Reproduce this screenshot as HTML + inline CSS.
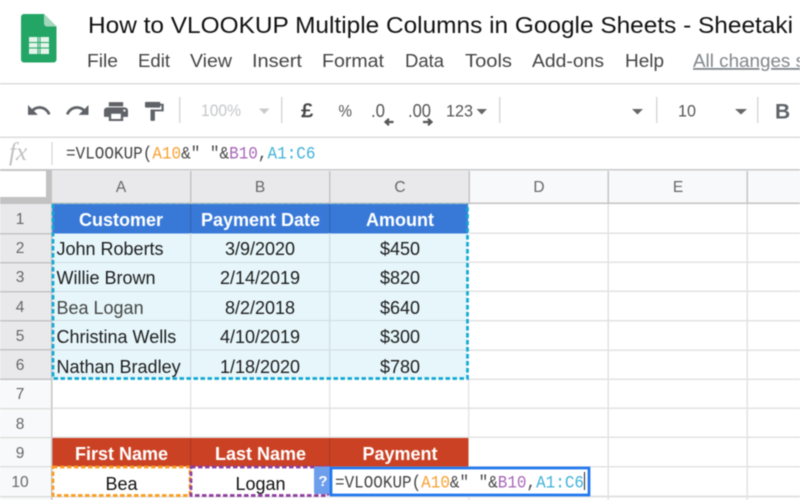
<!DOCTYPE html>
<html><head><meta charset="utf-8"><style>
html,body{margin:0;padding:0;background:#fff;width:800px;height:500px;overflow:hidden}
svg{display:block;filter:blur(.4px)}
text{font-family:"Liberation Sans",Arial,sans-serif}
.m{font-size:18px;fill:#444}
.mono{font-family:"Liberation Mono",monospace;font-size:17.500px;fill:#444}
.h{font-size:15.500px;fill:#666;text-anchor:middle}
.c{font-size:18px;fill:#1c1c1c}
.ctr{text-anchor:middle}
.w{font-size:18px;font-weight:bold;fill:#fff;text-anchor:middle}
.i{fill:#5f6368}
.o{fill:#f7a030}.p{fill:#a866b8}.b{fill:#3fb2d8}
</style></head><body>
<svg width="800" height="500" viewBox="0 0 800 500" xmlns="http://www.w3.org/2000/svg">
<rect width="800" height="500" fill="#fff"/>
<!-- logo -->
<path d="M24 14h20l12.500 12.500v33a3 3 0 0 1-3 3H24a3 3 0 0 1-3-3V17a3 3 0 0 1 3-3z" fill="#23a566"/>
<path d="M44 14l12.500 12.500H47a3 3 0 0 1-3-3z" fill="#a4d6bd"/>
<rect x="29" y="37" width="20" height="17" fill="#e6f4ec"/>
<path d="M29 42.500h20M29 48h20M38 37v17M40 37v17" stroke="#23a566" stroke-width="1" fill="none"/>
<!-- title -->
<text x="88" y="33" font-size="23" fill="#111" textLength="705" lengthAdjust="spacingAndGlyphs">How to VLOOKUP Multiple Columns in Google Sheets - Sheetaki</text>
<text class="m" x="87" y="67" textLength="31" lengthAdjust="spacingAndGlyphs">File</text>
<text class="m" x="138" y="67" textLength="32" lengthAdjust="spacingAndGlyphs">Edit</text>
<text class="m" x="190" y="67" textLength="42" lengthAdjust="spacingAndGlyphs">View</text>
<text class="m" x="252" y="67" textLength="50" lengthAdjust="spacingAndGlyphs">Insert</text>
<text class="m" x="322" y="67" textLength="62" lengthAdjust="spacingAndGlyphs">Format</text>
<text class="m" x="405" y="67" textLength="39" lengthAdjust="spacingAndGlyphs">Data</text>
<text class="m" x="465" y="67" textLength="47" lengthAdjust="spacingAndGlyphs">Tools</text>
<text class="m" x="532" y="67" textLength="72" lengthAdjust="spacingAndGlyphs">Add-ons</text>
<text class="m" x="625" y="67" textLength="39" lengthAdjust="spacingAndGlyphs">Help</text>
<text x="693" y="67" font-size="18" fill="#80868b" text-decoration="underline" textLength="112" lengthAdjust="spacingAndGlyphs">All changes s</text>
<!-- bars -->
<rect y="83" width="800" height="1.500" fill="#dcdcdc"/>
<rect y="136.500" width="800" height="1.500" fill="#dcdcdc"/>
<rect y="169" width="800" height="1.500" fill="#c8c8c8"/>
<g fill="#d8d8d8">
<rect x="179" y="97" width="1.500" height="26"/><rect x="281" y="97" width="1.500" height="26"/>
<rect x="499" y="97" width="1.500" height="26"/><rect x="656" y="97" width="1.500" height="26"/><rect x="757" y="97" width="1.500" height="26"/>
</g>
<!-- toolbar icons -->
<path class="i" transform="translate(25.800 97.300) scale(1.100)" d="M12.500 8c-2.650 0-5.050.99-6.900 2.600L2 7v9h9l-3.620-3.620c1.390-1.160 3.160-1.880 5.120-1.880 3.540 0 6.550 2.310 7.600 5.500l2.370-.78C21.080 11.030 17.150 8 12.500 8z"/>
<path class="i" transform="translate(64.300 97.300) scale(1.100)" d="M18.400 10.600C16.550 8.990 14.150 8 11.500 8c-4.650 0-8.580 3.030-9.960 7.220L3.900 16c1.050-3.190 4.050-5.500 7.600-5.500 1.950 0 3.730.72 5.120 1.880L13 16h9V7l-3.600 3.600z"/>
<path class="i" transform="translate(101.600 99) scale(1.200 1.050)" d="M19 8H5c-1.660 0-3 1.340-3 3v6h4v4h12v-4h4v-6c0-1.660-1.340-3-3-3zm-3 11H8v-5h8v5zm3-7c-.55 0-1-.45-1-1s.45-1 1-1 1 .45 1 1-.45 1-1 1zm-1-9H6v4h12V3z"/>
<path class="i" transform="translate(140.600 100) scale(1.100 .95)" d="M18 4V3c0-.55-.45-1-1-1H5c-.55 0-1 .45-1 1v4c0 .55.45 1 1 1h12c.55 0 1-.45 1-1V6h1v4H9v11c0 .55.45 1 1 1h2c.55 0 1-.45 1-1v-9h8V4h-3z"/>
<text x="201" y="116" font-size="17" fill="#c4c6c8" textLength="40" lengthAdjust="spacingAndGlyphs">100%</text>
<path d="M259 108.500h10.500l-5.250 5.500z" fill="#c8cacc"/>
<text x="301" y="117" font-size="19" fill="#444" stroke="#444" stroke-width=".5" textLength="12" lengthAdjust="spacingAndGlyphs">£</text>
<text x="338.500" y="116.500" font-size="17" fill="#555" textLength="13.500" lengthAdjust="spacingAndGlyphs">%</text>
<text x="371" y="117" font-size="18" fill="#555" textLength="14" lengthAdjust="spacingAndGlyphs">.0</text>
<path d="M393.500 122h-8m3.500-3.200l-3.500 3.200 3.500 3.200" stroke="#555" stroke-width="2.200" fill="none"/>
<text x="408" y="117" font-size="18" fill="#555" textLength="23" lengthAdjust="spacingAndGlyphs">.00</text>
<path d="M423 122h8.500m-3.500-3.200l3.500 3.200-3.500 3.200" stroke="#555" stroke-width="2.200" fill="none"/>
<text x="446" y="116.500" font-size="17" fill="#555" textLength="27" lengthAdjust="spacingAndGlyphs">123</text>
<path d="M476.500 109h10.500l-5.250 5.500z" fill="#666"/>
<path d="M632 109h11l-5.500 5.500z" fill="#666"/>
<text x="678" y="116.500" font-size="17" fill="#555" textLength="18" lengthAdjust="spacingAndGlyphs">10</text>
<path d="M735 109h12l-6 5.500z" fill="#666"/>
<text x="775" y="118.500" font-size="21" font-weight="bold" fill="#5f6368">B</text>
<!-- formula bar -->
<text x="9" y="160" font-style="italic" font-size="25" fill="#bfbfbf" style="font-family:'Liberation Serif',serif">fx</text>
<rect x="51.500" y="142" width="1" height="23" fill="#cfcfcf"/>
<text class="mono" x="66" y="158.500" textLength="249.500" lengthAdjust="spacingAndGlyphs">=VLOOKUP(<tspan class="o">A10</tspan>&amp;" "&amp;<tspan class="p">B10</tspan>,<tspan class="b">A1:C6</tspan></text>
<!-- column header -->
<rect y="170.500" width="800" height="33" fill="#f8f9fa"/>
<rect x="52" y="171" width="417" height="32" fill="#e9e9eb"/>
<!-- row header -->
<rect y="203" width="52" height="297" fill="#f8f9fa"/>
<rect y="203" width="52" height="176" fill="#e9e9eb"/>
<!-- corner -->
<rect y="170" width="52" height="34" fill="#c2c2c2"/>
<rect y="171" width="46" height="26" fill="#fff"/>
<!-- cell fills -->
<rect x="52" y="233" width="416" height="146" fill="#e6f6fb"/>
<rect x="52" y="203.500" width="416" height="30" fill="#3879d8"/>
<rect x="52" y="437.500" width="416.500" height="29" fill="#cb4124"/>
<rect x="52" y="467" width="277" height="29" fill="#fff"/>
<!-- grid -->
<g fill="#e2e2e2">
<rect x="469" y="232.500" width="331" height="1.500"/><rect x="469" y="261.500" width="331" height="1.500"/><rect x="469" y="290.500" width="331" height="1.500"/><rect x="469" y="320" width="331" height="1.500"/><rect x="469" y="349.500" width="331" height="1.500"/><rect x="469" y="378.500" width="331" height="1.500"/>
<rect x="52" y="407.500" width="748" height="1.500"/><rect x="52" y="436.500" width="748" height="1.500"/><rect x="469" y="466" width="331" height="1.500"/><rect x="469" y="495.500" width="331" height="1.500"/>
<rect x="190" y="380" width="1.300" height="57"/><rect x="329" y="380" width="1.300" height="57"/><rect x="468" y="380" width="1.300" height="57"/><rect x="468" y="497" width="1.300" height="3"/><rect x="607.500" y="204" width="1.500" height="296"/><rect x="746.500" y="204" width="1.500" height="296"/>
<rect y="496" width="800" height="1.500"/>
</g>
<g fill="#cfdde2">
<rect x="52" y="262" width="416" height="1"/><rect x="52" y="291" width="416" height="1"/><rect x="52" y="320" width="416" height="1"/><rect x="52" y="349.500" width="416" height="1"/>
<rect x="190" y="233" width="1.300" height="146"/><rect x="329" y="233" width="1.300" height="146"/>
</g>
<rect x="190" y="204" width="1.300" height="29" fill="#3067ba"/><rect x="329" y="204" width="1.300" height="29" fill="#3067ba"/>
<rect x="190" y="438" width="1.300" height="28" fill="#ae3a20"/><rect x="329" y="438" width="1.300" height="28" fill="#ae3a20"/>
<!-- header grid lines -->
<g fill="#c4c4c4">
<rect x="190" y="171" width="1.500" height="32"/><rect x="329" y="171" width="1.500" height="32"/><rect x="468.500" y="171" width="1.500" height="32"/><rect x="607.500" y="171" width="1.500" height="32"/><rect x="746.500" y="171" width="1.500" height="32"/>
<rect x="52" y="202.500" width="748" height="1.500"/>
<rect x="51" y="204" width="1.500" height="296"/>
<rect y="233" width="52" height="1.500"/><rect y="262" width="52" height="1.500"/><rect y="291" width="52" height="1.500"/><rect y="320" width="52" height="1.500"/><rect y="349" width="52" height="1.500"/><rect y="378.500" width="52" height="1.500"/>
</g>
<g fill="#dcdcdc"><rect y="408" width="52" height="1.300"/><rect y="437" width="52" height="1.300"/><rect y="466" width="52" height="1.300"/><rect y="496" width="52" height="1.300"/></g>
<!-- headers text -->
<text class="h" x="121" y="192">A</text><text class="h" x="260" y="192">B</text><text class="h" x="400" y="192">C</text><text class="h" x="539" y="192">D</text><text class="h" x="678" y="192">E</text>
<text class="h" x="20" y="224">1</text><text class="h" x="20" y="253">2</text><text class="h" x="20" y="282">3</text><text class="h" x="20" y="312">4</text><text class="h" x="20" y="341">5</text><text class="h" x="20" y="370">6</text><text class="h" x="20" y="399">7</text><text class="h" x="20" y="429">8</text><text class="h" x="20" y="458">9</text><text class="h" x="20" y="487">10</text>
<!-- cells -->
<text class="w" x="121" y="226">Customer</text><text class="w" x="260.500" y="226">Payment Date</text><text class="w" x="400" y="226">Amount</text>
<text class="c" x="56.500" y="255">John Roberts</text><text class="c ctr" x="260" y="255">3/9/2020</text><text class="c ctr" x="400" y="255">$450</text>
<text class="c" x="56.500" y="284">Willie Brown</text><text class="c ctr" x="260" y="284">2/14/2019</text><text class="c ctr" x="400" y="284">$820</text>
<text class="c" x="56.500" y="314" style="fill:#444">Bea Logan</text><text class="c ctr" x="260" y="314">8/2/2018</text><text class="c ctr" x="400" y="314">$640</text>
<text class="c" x="56.500" y="343">Christina Wells</text><text class="c ctr" x="260" y="343">4/10/2019</text><text class="c ctr" x="400" y="343">$300</text>
<text class="c" x="56.500" y="373">Nathan Bradley</text><text class="c ctr" x="260" y="373">1/18/2020</text><text class="c ctr" x="400" y="373">$780</text>
<text class="w" x="121.500" y="460">First Name</text><text class="w" x="260.500" y="460">Last Name</text><text class="w" x="400" y="460">Payment</text>
<text class="c ctr" x="121.500" y="490" style="fill:#111">Bea</text><text class="c ctr" x="260.500" y="490" style="fill:#111">Logan</text>
<!-- dashed ranges -->
<path d="M53 204H467.500" fill="none" stroke="#17a8d0" stroke-opacity=".35" stroke-width="1.500" stroke-dasharray="4 3"/>
<path d="M53 204V378.500H467.500V204" fill="none" stroke="#12a8d2" stroke-width="2.700" stroke-dasharray="4.500 2.500"/>
<rect x="53" y="467" width="137" height="28.500" fill="none" stroke="#f99d1f" stroke-width="2.700" stroke-dasharray="4.500 2.500"/>
<rect x="191" y="467" width="137" height="28.500" fill="none" stroke="#8e3d9e" stroke-width="2.700" stroke-dasharray="4.500 2.500"/>
<!-- editor -->
<rect x="314" y="466.500" width="18" height="27.500" rx="2" fill="#6d9eeb"/>
<text x="323" y="486" font-size="15" font-weight="bold" fill="#fff" text-anchor="middle">?</text>
<rect x="331" y="468" width="258" height="27" fill="#fff" stroke="#1f76ee" stroke-width="2.700"/>
<text class="mono" x="335" y="487.500" textLength="249" lengthAdjust="spacingAndGlyphs">=VLOOKUP(<tspan class="o">A10</tspan>&amp;" "&amp;<tspan class="p">B10</tspan>,<tspan class="b">A1:C6</tspan></text>
<rect x="584" y="472" width="1" height="18" fill="#222"/>
</svg>
</body></html>
